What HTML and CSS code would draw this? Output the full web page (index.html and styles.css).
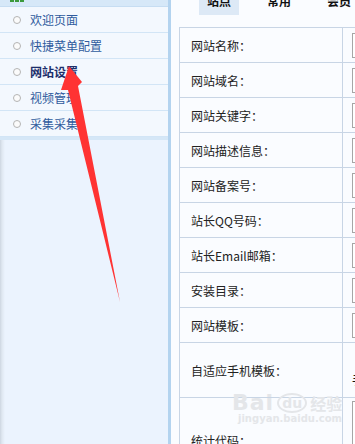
FILE: index.html
```html
<!DOCTYPE html>
<html lang="zh-CN">
<head>
<meta charset="utf-8">
<title>网站设置</title>
<link rel="stylesheet" href="styles.css">
</head>
<body>
<div class="page">
  <aside class="side">
    <div class="side-head"><span class="logo"><i></i><i></i><i></i></span></div>
    <ul class="menu">
      <li><span class="dot"></span>欢迎页面</li>
      <li><span class="dot"></span>快捷菜单配置</li>
      <li class="cur"><span class="dot"></span>网站设置</li>
      <li><span class="dot"></span>视频管理</li>
      <li><span class="dot"></span>采集采集</li>
    </ul>
    <div class="menu-end"></div>
  </aside>
  <main class="main">
    <nav class="tabs">
      <span class="tab on">站点</span>
      <span class="tab">常用</span>
      <span class="tab">会员</span>
    </nav>
    <table class="form">
      <colgroup><col class="c1"><col class="c2"></colgroup>
      <tr><td class="lbl">网站名称：</td><td class="val"><input class="ipt" value="苹果电影"></td></tr>
      <tr><td class="lbl">网站域名：</td><td class="val"><input class="ipt" value=""></td></tr>
      <tr><td class="lbl">网站关键字：</td><td class="val"><input class="ipt" value="电影"></td></tr>
      <tr><td class="lbl">网站描述信息：</td><td class="val"><input class="ipt" value="苹果"></td></tr>
      <tr><td class="lbl">网站备案号：</td><td class="val"><input class="ipt light" value="icp"></td></tr>
      <tr><td class="lbl">站长QQ号码：</td><td class="val"><input class="ipt" value=""></td></tr>
      <tr><td class="lbl">站长Email邮箱：</td><td class="val"><input class="ipt" value=""></td></tr>
      <tr><td class="lbl">安装目录：</td><td class="val"><input class="ipt" value="/"></td></tr>
      <tr><td class="lbl">网站模板：</td><td class="val"><input class="ipt" value=""></td></tr>
      <tr class="tall"><td class="lbl">自适应手机模板：</td><td class="val bottom">手机模板</td></tr>
      <tr class="code"><td class="lbl">统计代码：</td><td class="val top"><textarea class="area"></textarea></td></tr>
    </table>
  </main>
  <svg class="arrow" width="355" height="444" viewBox="0 0 355 444" aria-hidden="true">
    <polygon points="69,66 82,82 78,86 120,302 68,90 61,90" fill="#ff3333"/>
  </svg>
  <div class="mark">
    <div class="mark-top"><span class="b">Bai</span><span class="paw">du</span><span class="cn">经验</span></div>
    <div class="mark-url">jingyan.baidu.com</div>
  </div>
</div>
</body>
</html>
```

FILE: styles.css
```css
* { box-sizing: border-box; }
html, body { margin: 0; padding: 0; }
body {
  width: 355px;
  height: 444px;
  overflow: hidden;
  font-family: "Noto Sans CJK SC", "Microsoft YaHei", sans-serif;
  font-size: 12px;
}
.page {
  position: relative;
  display: flex;
  width: 355px;
  height: 444px;
  overflow: hidden;
}
.side {
  width: 171px;
  flex: none;
  border-right: 3px solid #b3d3ef;
  background: linear-gradient(to right, #cdd6e1 0, #dfe7f1 2px, #ebf3fe 5px);
  display: flex;
  flex-direction: column;
}
.side-head {
  height: 7px;
  background: #d6e8f8;
  border-bottom: 1px solid #c6ddf2;
  padding-left: 10px;
}
.logo { display: flex; gap: 1px; }
.logo i {
  display: block;
  width: 4px;
  height: 2px;
  background: #3c9a3c;
}
.menu {
  list-style: none;
  margin: 0;
  padding: 0;
}
.menu li {
  height: 26px;
  border-bottom: 1px solid #d2e5f6;
  background: #f3f8fe;
  display: flex;
  align-items: center;
  padding-left: 13px;
  color: #2f5b9d;
  font-size: 12px;
}
.menu li.cur { color: #1d2f6b; font-weight: bold; }
.dot {
  width: 8px;
  height: 8px;
  border: 1px solid #b4b4b4;
  border-radius: 50%;
  background: #fbfbfb;
  margin-right: 9px;
  flex: none;
}
.menu-end {
  height: 3px;
  background: #d5e7f7;
}
.main {
  flex: 1;
  min-width: 0;
  overflow: hidden;
  background: #fafcff;
  padding-left: 8px;
}
.tabs {
  display: flex;
  gap: 20px;
  padding-left: 20px;
  margin-top: -6px;
  height: 21px;
}
.tab {
  flex: none;
  width: 40px;
  height: 21px;
  text-align: center;
  line-height: 14px;
  font-weight: bold;
  color: #111;
  font-size: 12px;
}
.tab.on { background: #dde9f6; }
.form {
  margin-top: 12px;
  border-collapse: collapse;
  border: 1px solid #c8d5e5;
  table-layout: fixed;
  width: 400px;
}
.c1 { width: 163px; }
.c2 { width: 237px; }
.form td {
  border: 1px solid #c8d5e5;
  padding: 0;
  height: 35px;
  white-space: nowrap;
}
.lbl {
  padding-left: 11px !important;
  color: #222;
  vertical-align: middle;
}
.val { padding-left: 9px !important; color: #111; }
.tall td { height: 55px; }
.val.bottom { vertical-align: bottom; padding-bottom: 9px !important; }
.code td { height: 86px; }
.val.top { vertical-align: top; padding-top: 3px !important; }
.ipt {
  display: block;
  width: 180px;
  height: 25px;
  border: 1px solid #a6a6a6;
  padding: 0 2px;
  font: 12px "Noto Sans CJK SC", sans-serif;
  color: #8a5a10;
  background: #fff;
}
.ipt.light { color: #e2b44a; }
.area {
  display: block;
  width: 180px;
  height: 78px;
  border: 1px solid #a6a6a6;
  background: #fff;
  resize: none;
}
.arrow {
  position: absolute;
  left: 0;
  top: 0;
  pointer-events: none;
}
.mark {
  position: absolute;
  left: 232px;
  top: 390px;
  color: #e4e6e9;
  pointer-events: none;
}
.mark-top {
  display: flex;
  align-items: center;
  gap: 3px;
  font-family: "DejaVu Sans", sans-serif;
}
.mark-top .b { font-size: 22px; font-weight: bold; letter-spacing: 1px; }
.mark-top .paw {
  font-size: 14px;
  font-weight: bold;
  border: 2px solid #e4e6e9;
  border-radius: 50%;
  padding: 0 3px;
}
.mark-top .cn { font-family: "Noto Sans CJK SC", sans-serif; font-size: 16px; font-weight: bold; }
.mark-url {
  font-family: "DejaVu Sans", sans-serif;
  font-size: 10px;
  font-weight: bold;
  margin-top: -2px;
  padding-left: 6px;
}
```
